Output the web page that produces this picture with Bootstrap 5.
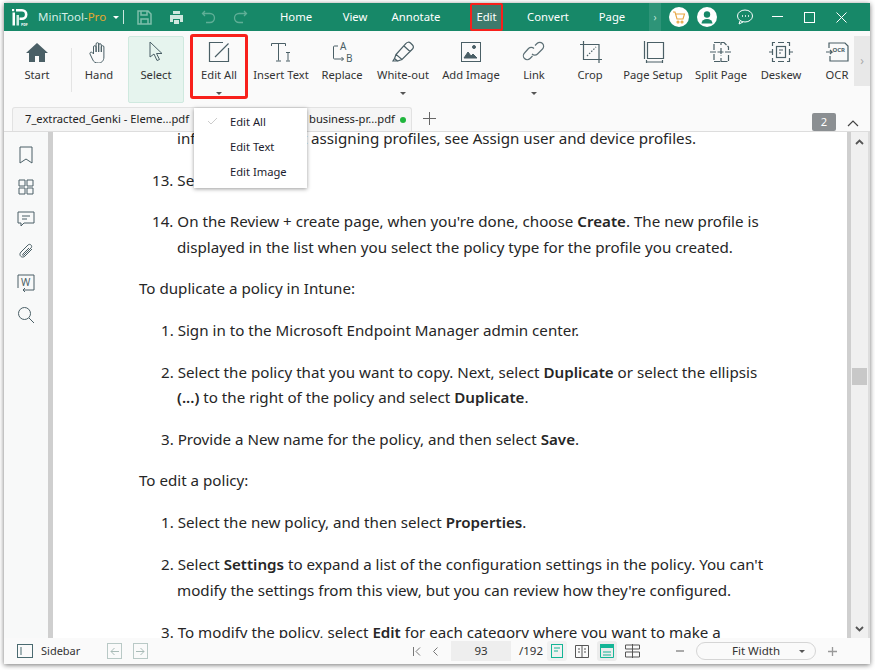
<!DOCTYPE html>
<html lang="en"><head><meta charset="utf-8"><title>MiniTool PDF</title>
<link href="https://cdn.jsdelivr.net/npm/bootstrap@5.3.0/dist/css/bootstrap.min.css" rel="stylesheet">
<style>
html,body{height:670px;overflow:hidden;background:#fff;font-family:"Noto Sans","Open Sans",sans-serif;color:#222}
body{padding:3px 5px 5px 4px}
.win{height:661px;box-shadow:0 1px 5px rgba(0,0,0,.55);background:#fafafa;overflow:hidden;position:relative;width:866px}
.tbar{height:28px;background:#178868;color:#fff;font-size:11.3px;flex:none}
.logo{width:20px;height:20px;margin:0 7px 0 7px;flex:none}
.appn{font-size:11.5px;color:#d5efe6;width:75px}.appn b{font-weight:400;color:#e8a72c}
.caret{width:0;height:0;border-left:3px solid transparent;border-right:3px solid transparent;border-top:3px solid currentColor;flex:none}
.vsep{width:1px;height:14px;background:#cde7df;margin:0 4px 0 4px}
.qi{width:32px;display:flex;justify-content:center}
.tabm{text-align:center;line-height:28px;height:28px;flex:none}
.tabm.cur{background:#3e7a6c;outline:2px solid #f8201b;outline-offset:-2px;border-radius:2px;width:33px;margin:0 12px 0 20px}
.more{width:12px;height:28px;background:#2e9478;color:#bfe3d7;font-size:10px;line-height:28px;text-align:center;margin-left:6px}
.rnd{width:20px;height:20px;border-radius:50%;background:#fff;margin-left:8px;display:flex;align-items:center;justify-content:center}
.chat{margin:0 7px 0 19px;display:flex}
.wb{width:32px;display:flex;justify-content:center;align-items:center}
.ribbon{height:76px;padding-top:5px;font-size:11.2px;color:#333;position:relative;flex:none}
.rb{display:flex;flex-direction:column;align-items:center;height:67px;padding-top:5px;flex:none;position:relative;white-space:nowrap}
.rb svg{height:22px;width:24px;margin-bottom:4px;display:block;flex:none}
.rb .caret{margin-top:8px;color:#555}
.rb.sel{background:#e6f4ee;border:1px solid #cfe9df;border-radius:2px;padding-top:4px;margin-left:2px}
.rb.hl{outline:3px solid #f8201b;outline-offset:-3px;border-radius:3px;margin:-2px 0 0 6px;height:65px;padding-top:7px}
.rsep{width:1px;height:44px;background:#e4e4e4;margin:12px 0 0 1px;flex:none}
.rnext{width:16px;height:50px;background:#e8e8e8;color:#aaa;position:absolute;right:0;top:5px;text-align:center;line-height:50px;font-size:12px}
.tabsrow{height:25px;border-bottom:1px solid #ddd;font-size:11.2px;position:relative;flex:none}
.dtab{height:24px;width:400px;margin-left:8px;border:1px solid #e2e2e2;border-bottom:0;border-radius:3px 3px 0 0;background:#f5f5f5;padding-left:12px;line-height:22px;position:relative}
.dtab i{position:absolute;left:296px;top:0;font-style:normal}
.gdot{width:6px;height:6px;background:#1fb53c;border-radius:50%;position:absolute;left:387px;top:9px}
.plus{position:absolute;left:419px;top:5px}
.pnum{background:#8b8f92;color:#fff;width:24px;height:18px;border-radius:2px;text-align:center;line-height:18px;position:absolute;left:808px;top:6px}
.upc{position:absolute;left:843px;top:13px}
.main{height:506px;flex:none}
.side{width:44px;background:#f8f9f9;flex:none;padding-top:14px}
.side svg{display:block;width:18px;height:18px;margin:0 auto 14px}
.gs{width:5px;background:#cfcfcf;flex:none}
.pg{width:794px;background:#fff;flex:none;font-size:15.15px;color:#262626;overflow:hidden;position:relative}
.pg .ln{position:absolute;white-space:nowrap;line-height:20px}
.pg b{font-weight:600}
.scr{width:23px;background:#f0f0f0;flex:none;position:relative;border-left:4px solid #cfcfcf;border-right:2px solid #ddd}
.thumb{position:absolute;left:1px;top:236px;width:15px;height:17px;background:#c8c8c8}
.ch1{position:absolute;left:4px;top:7px}.ch2{position:absolute;left:4px;bottom:6px}
.sbar{height:26px;font-size:11.5px;color:#333;flex:none}
.sbi{margin:0 8px 0 13px}
.sbl{width:66px;font-size:11px}
.navb{width:15px;height:16px;border:1px solid #b9c9c6;display:flex;align-items:center;justify-content:center;margin-right:11px}
.m12{margin-right:12px}.m13{margin-right:13px}
.pinp{width:60px;height:20px;background:#eee;text-align:center;line-height:20px;margin-right:8px}
.tot{width:23px;margin-right:5px;white-space:nowrap}
.vb{width:20px;height:20px;border-radius:3px;display:flex;align-items:center;justify-content:center;margin-right:5px}
.vbg1{background:#f1f1f1}.vbg2{background:#ececec}
.minus{margin:0 12px 0 29px}
.zoomb{width:120px;height:18px;border:1px solid #d5d5d5;border-radius:9px;text-align:center;line-height:16px;position:relative;background:#fafafa}
.zoomb .caret{position:absolute;right:10px;top:7px;color:#555}
.plz{margin:0 33px 0 12px}
.menu{position:absolute;left:190px;top:105px;width:113px;height:80px;background:#fff;box-shadow:0 1px 4px rgba(0,0,0,.4);font-size:11.2px;color:#1c1c2e;z-index:5;padding-top:1px}
.menu div{height:25.2px;line-height:25px;padding-left:36px;position:relative}
.menu svg{position:absolute;left:13px;top:8px}
</style></head><body>
<div class="win d-flex flex-column">
 <div class="tbar d-flex align-items-center">
  <svg class="logo" viewBox="0 0 20 20"><path d="M1 2h2.200v2.200H1z" fill="#fff"/><path d="M1.500 5.500h2.500v13h-2.500z" fill="#fff"/><path d="M5 2h6a5.500 5.500 0 0 1 0 11H8.500v-2.600H11a2.900 2.900 0 0 0 0-5.800H5z" fill="#fff"/><path d="M5.500 8h2.500v10.500H5.500z" fill="#cfeee3"/><text x="10" y="18.500" font-size="3.600" font-weight="700" fill="#fff">PDF</text></svg>
  <span class="appn">MiniTool-<b>Pro</b></span>
  <span class="caret"></span><span class="vsep"></span>
  <span class="qi"><svg width="15" height="15" viewBox="0 0 15 15" fill="none" stroke="#7fbfab" stroke-width="1.5"><path d="M1 1h10l3 3v10H1zM4 1v4h6V1M4 14V9h7v5"/></svg></span>
  <span class="qi"><svg width="15" height="15" viewBox="0 0 15 15" fill="#cfe8df"><path d="M4 1h7v3H4zM1 5h13v7h-3V9H4v3H1zM5 10h5v4H5z"/></svg></span>
  <span class="qi"><svg width="15" height="14" viewBox="0 0 15 14" fill="none" stroke="#5fae96" stroke-width="1.3"><path d="M4 1L1.500 3.500 4 6M2 3.500h7a4 4 0 0 1 0 9H5"/></svg></span>
  <span class="qi"><svg width="15" height="14" viewBox="0 0 15 14" fill="none" stroke="#5fae96" stroke-width="1.3"><path d="M11 1l2.500 2.500L11 6M13 3.500H6a4 4 0 0 0 0 9h4"/></svg></span>
  <span class="tabm tw64">Home</span><span class="tabm tw54">View</span><span class="tabm tw68">Annotate</span><span class="tabm cur">Edit</span><span class="tabm tw66">Convert</span><span class="tabm tw62">Page</span>
  <span class="more">›</span>
  <span class="rnd"><svg width="14" height="14" viewBox="0 0 14 14" fill="none" stroke="#e8a541" stroke-width="1.100"><path d="M1 2h2l2 7h6l1.500-5H3.500"/><circle cx="6" cy="12" r="1"/><circle cx="10" cy="12" r="1"/></svg></span>
  <span class="rnd"><svg width="14" height="14" viewBox="0 0 14 14" fill="#178868"><circle cx="7" cy="4.500" r="3.200"/><path d="M1.500 13.500a5.500 4.500 0 0 1 11 0z"/></svg></span>
  <span class="chat"><svg width="18" height="16" viewBox="0 0 18 16" fill="none" stroke="#fff"><ellipse cx="9" cy="7" rx="7.500" ry="6"/><path d="M4 12l-1 3 4-2"/><path d="M6 7h1M9 7h1M12 7h1" stroke-width="1.300"/></svg></span>
  <span class="wb"><svg width="11" height="2"><rect width="11" height="1" fill="#fff"/></svg></span>
  <span class="wb"><svg width="11" height="11"><rect x=".5" y=".5" width="10" height="10" fill="none" stroke="#fff"/></svg></span>
  <span class="wb"><svg width="11" height="11" stroke="#fff"><path d="M.5.500l10 10M10.500.500l-10 10"/></svg></span>
 </div>
 <div class="ribbon d-flex">
  <div class="rb w66"><svg viewBox="0 0 24 22" fill="#4a5f66"><path d="M12 2L1 12h3v9h6v-6h4v6h6v-9h3z"/></svg>Start</div>
  <div class="rsep"></div>
  <div class="rb w54"><svg viewBox="0 0 24 22" fill="none" stroke="#4a5f66"><path d="M6.500 13V6a1.300 1.300 0 0 1 2.600 0v5-8a1.300 1.300 0 0 1 2.600 0v8-7a1.300 1.300 0 0 1 2.600 0v7-5a1.300 1.300 0 0 1 2.600 0v10c0 4-2.500 6-5.500 6-3 0-5-1-6-4l-2.400-5c-.6-2 2-2.600 3-.6z"/></svg>Hand</div>
  <div class="rb sel w56"><svg viewBox="0 0 24 22" fill="none" stroke="#4a5f66"><path d="M6 1v15l4-3 3 6.500 2.500-1-3-6H18z"/></svg>Select</div>
  <div class="rb hl w58"><svg viewBox="0 0 24 22" fill="none" stroke="#4a5f66" stroke-width="1.200"><path d="M16 1.500H2.500v19h19V7M8 16L21.500 2.500"/></svg>Edit All<span class="caret"></span></div>
  <div class="rb w66"><svg viewBox="0 0 24 22" fill="none" stroke="#4a5f66"><path d="M2.500 5V2.500h14V5M9.500 2.500V19.500M7 20h5M17 11.500h4M19 11.500v8M17 20h4"/></svg>Insert Text</div>
  <div class="rb w56"><svg viewBox="0 0 24 22" fill="none" stroke="#4a5f66"><path d="M8 5H4.500a1 1 0 0 0-1 1v11a1 1 0 0 0 1 1h9l-2-2M13.500 18l-2 2"/><text x="10" y="9" font-size="10" fill="#4a5f66" stroke="none">A</text><text x="16" y="21" font-size="10" fill="#4a5f66" stroke="none">B</text></svg>Replace</div>
  <div class="rb w66"><svg viewBox="0 0 24 22" fill="none" stroke="#4a5f66" stroke-width="1.200"><path d="M15 2.500a3 3 0 0 1 4.500-.5l2 2a3 3 0 0 1 0 4L11 18.500l-6-5zM5 13.500l-1.500 4L6.500 20l4.500-1.500M3.500 17.500L2 20h4.500M13 5l6 5.500"/></svg>White-out<span class="caret"></span></div>
  <div class="rb w70"><svg viewBox="0 0 24 22" fill="none" stroke="#4a5f66"><rect x="2.500" y="1.500" width="19" height="19"/><path d="M5 17l4-6 3 4 2-2 4 4z" fill="#4a5f66"/><circle cx="15" cy="6" r="1.500" fill="#4a5f66"/></svg>Add Image</div>
  <div class="rb w56"><svg viewBox="0 0 24 22" fill="none" stroke="#5d7076" stroke-width="1.200"><path d="M13 4.500l2-2a3.800 3.800 0 0 1 5.500 5.500l-5 5a3.800 3.800 0 0 1-5.500 0"/><path d="M12 7.500a3.800 3.800 0 0 0-5.500 0l-4 4.500a3.800 3.800 0 0 0 5.500 5.500l2.500-2.500"/></svg>Link<span class="caret"></span></div>
  <div class="rb w56"><svg viewBox="0 0 24 22" fill="none" stroke="#4a5f66" stroke-width="1.200"><path d="M5.500 0v18.500H24M2 3.500h19V22"/><path d="M9 15L18 6" stroke-dasharray="1.500 1.500"/></svg>Crop</div>
  <div class="rb w70"><svg viewBox="0 0 24 22" fill="none" stroke="#4a5f66" stroke-width="1.200"><path d="M6.500 1.500h16v16h-16zM3.500 0v18M6 21h15M5.500 19v4M21.500 19v4"/></svg>Page Setup</div>
  <div class="rb w66"><svg viewBox="0 0 24 22" fill="none" stroke="#4a5f66" stroke-width="1.200"><path d="M5 9V1.500h10l4.500 4.500v3M5 13v7.500h14.500V13M1 11h22M12 1v3M12 7v8M12 17v4" stroke-dasharray="6 1.500"/></svg>Split Page</div>
  <div class="rb w54"><svg viewBox="0 0 24 22" fill="none" stroke="#4a5f66" stroke-width="1.200"><path d="M6 1.500H3.500V5M3.500 8v6M3.500 17v3.500H6M9 1.500h6M18 1.500h2.500V5M20.500 8v6M20.500 17v3.500H18M9 20.500h6M0 11h3M21 11h3"/><rect x="7.500" y="5.500" width="9" height="11"/><path d="M10 9h4M10 12h2"/></svg>Deskew</div>
  <div class="rb w58"><svg viewBox="0 0 24 22" fill="none" stroke="#4a5f66" stroke-width="1.200"><path d="M4 7V2h16l3 3v15H5v-5M1 11h6l-2-2M7 11l-2 2"/><text x="7.500" y="11" font-size="6" font-weight="700" fill="#4a5f66" stroke="none">OCR</text></svg>OCR</div>
  <div class="rnext">›</div>
 </div>
 <div class="tabsrow">
  <div class="dtab"><span>7_extracted_Genki - Eleme...pdf</span><i>business-pr...pdf</i><span class="gdot"></span></div>
  <svg width="13" height="13" class="plus" stroke="#666"><path d="M6.500 0v13M0 6.500h13"/></svg>
  <span class="pnum">2</span>
  <svg width="12" height="7" class="upc" fill="none" stroke="#444" stroke-width="1.200"><path d="M1 6l5-5 5 5"/></svg>
 </div>
 <div class="main d-flex">
  <div class="side">
   <svg viewBox="0 0 18 18" fill="none" stroke="#4a5f66"><path d="M3 1h12v16l-6-4-6 4z"/></svg>
   <svg viewBox="0 0 18 18" fill="none" stroke="#4a5f66"><path d="M2 2h6v6H2zM10 2h6v6h-6zM2 10h6v6H2zM10 10h6v6h-6z"/></svg>
   <svg viewBox="0 0 18 18" fill="none" stroke="#4a5f66"><path d="M1 2h16v11H7l-3 3v-3H1zM5 6h8M5 9h5"/></svg>
   <svg viewBox="0 0 18 18" fill="none" stroke="#4a5f66"><path d="M15 7l-7 7c-3 3-7-1-4-4l7-7c2-2 5 1 3 3l-7 7c-1 1-2 0-1-1l6-6"/></svg>
   <svg viewBox="0 0 18 18" fill="none" stroke="#4a5f66"><path d="M1 14V1h16v15H6l2-2M6 16l2 2"/><text x="4" y="12" font-size="10" fill="#4a5f66" stroke="none">W</text></svg>
   <svg viewBox="0 0 18 18" fill="none" stroke="#4a5f66"><circle cx="7.500" cy="7.500" r="6"/><path d="M12 12l5 5"/></svg>
  </div>
  <div class="gs"></div>
  <div class="pg">
   <div class="ln x124 t1">information about assigning profiles, see Assign user and device profiles.</div>
   <div class="ln x99 t2">13. Select Next.</div>
   <div class="ln x99 t3">14. On the Review + create page, when you're done, choose <b>Create</b>. The new profile is</div>
   <div class="ln x124 t4">displayed in the list when you select the policy type for the profile you created.</div>
   <div class="ln x86 t5">To duplicate a policy in Intune:</div>
   <div class="ln x108 t6">1. Sign in to the Microsoft Endpoint Manager admin center.</div>
   <div class="ln x108 t7">2. Select the policy that you want to copy. Next, select <b>Duplicate</b> or select the ellipsis</div>
   <div class="ln x124 t8"><b>(...)</b> to the right of the policy and select <b>Duplicate</b>.</div>
   <div class="ln x108 t9">3. Provide a New name for the policy, and then select <b>Save</b>.</div>
   <div class="ln x86 t10">To edit a policy:</div>
   <div class="ln x108 t11">1. Select the new policy, and then select <b>Properties</b>.</div>
   <div class="ln x108 t12">2. Select <b>Settings</b> to expand a list of the configuration settings in the policy. You can't</div>
   <div class="ln x124 t13">modify the settings from this view, but you can review how they're configured.</div>
   <div class="ln x108 t14">3. To modify the policy, select <b>Edit</b> for each category where you want to make a</div>
  </div>
  <div class="scr"><svg class="ch1" width="9" height="6" fill="none" stroke="#555" stroke-width="1.800"><path d="M1 5l3.500-3.500L8 5"/></svg><div class="thumb"></div><svg class="ch2" width="9" height="6" fill="none" stroke="#555" stroke-width="1.800"><path d="M1 1l3.500 3.500L8 1"/></svg></div>
 </div>
 <div class="sbar d-flex align-items-center">
  <svg class="sbi" width="16" height="14" fill="none" stroke="#4a6a70"><rect x=".5" y=".5" width="15" height="13"/><path d="M4 3v8"/></svg>
  <span class="sbl">Sidebar</span>
  <span class="navb"><svg width="9" height="9" fill="none" stroke="#a9bbb7"><path d="M9 4.500H1M4.500 1L1 4.500 4.500 8"/></svg></span><span class="navb"><svg width="9" height="9" fill="none" stroke="#a9bbb7"><path d="M0 4.500h8M4.500 1L8 4.500 4.500 8"/></svg></span>
  <span class="flex-grow-1"></span>
  <svg width="8" height="9" class="m12" fill="none" stroke="#777"><path d="M.5 0v9M7 .5L3 4.500 7 8.500"/></svg>
  <svg width="5" height="9" class="m13" fill="none" stroke="#777"><path d="M4.500 .5L.5 4.500l4 4"/></svg>
  <span class="pinp">93</span>
  <span class="tot">/192</span>
  <span class="vb vbg1"><svg width="12" height="14" fill="none" stroke="#14b596"><rect x=".5" y=".5" width="11" height="13"/><path d="M3 4h6M3 7h4"/></svg></span>
  <span class="vb"><svg width="14" height="13" fill="none" stroke="#555"><path d="M.5.500h13v12H.5zM7 .5v12M3 4h2M3 7h2M9 4h2M9 7h2"/></svg></span>
  <span class="vb vbg2"><svg width="14" height="14" fill="none" stroke="#14b596"><path d="M.5.500v13h13V.5"/><rect x="0" y="0" width="14" height="4" fill="#14b596" stroke="none"/><path d="M3 8h8M3 11h8"/></svg></span>
  <span class="vb"><svg width="15" height="14" fill="none" stroke="#555"><path d="M.5 1h14v4H.5zM.5 8h14v5H.5zM7.500 0v14"/></svg></span>
  <svg class="minus" width="8" height="2"><rect width="8" height="2" fill="#aaa"/></svg>
  <span class="zoomb">Fit Width<span class="caret"></span></span>
  <svg class="plz" width="9" height="9" stroke="#999"><path d="M4.500 0v9M0 4.500h9" stroke-width="1.300"/></svg>
 </div>
 <div class="menu">
  <div><svg width="11" height="8" fill="none" stroke="#ccc"><path d="M1 4l3 3 6-6"/></svg>Edit All</div><div>Edit Text</div><div>Edit Image</div>
 </div>
</div>
<style>
.tw64{width:64px;margin-left:8px}.tw54{width:54px}.tw68{width:68px}.tw66{width:66px}.tw62{width:62px}
.w54{width:54px}.w56{width:56px}.w58{width:58px}.w66{width:66px}.w70{width:70px}
.x86{left:86px}.x99{left:99px}.x108{left:108px}.x124{left:124px}
.t1{top:-4px}.t2{top:38px}.t3{top:79px}.t4{top:105px}.t5{top:146px}.t6{top:188px}.t7{top:230px}.t8{top:255px}.t9{top:297px}.t10{top:338px}.t11{top:380px}.t12{top:422px}.t13{top:448px}.t14{top:490px}
</style>
<script src="https://cdn.jsdelivr.net/npm/bootstrap@5.3.0/dist/js/bootstrap.bundle.min.js"></script>
</body></html>
